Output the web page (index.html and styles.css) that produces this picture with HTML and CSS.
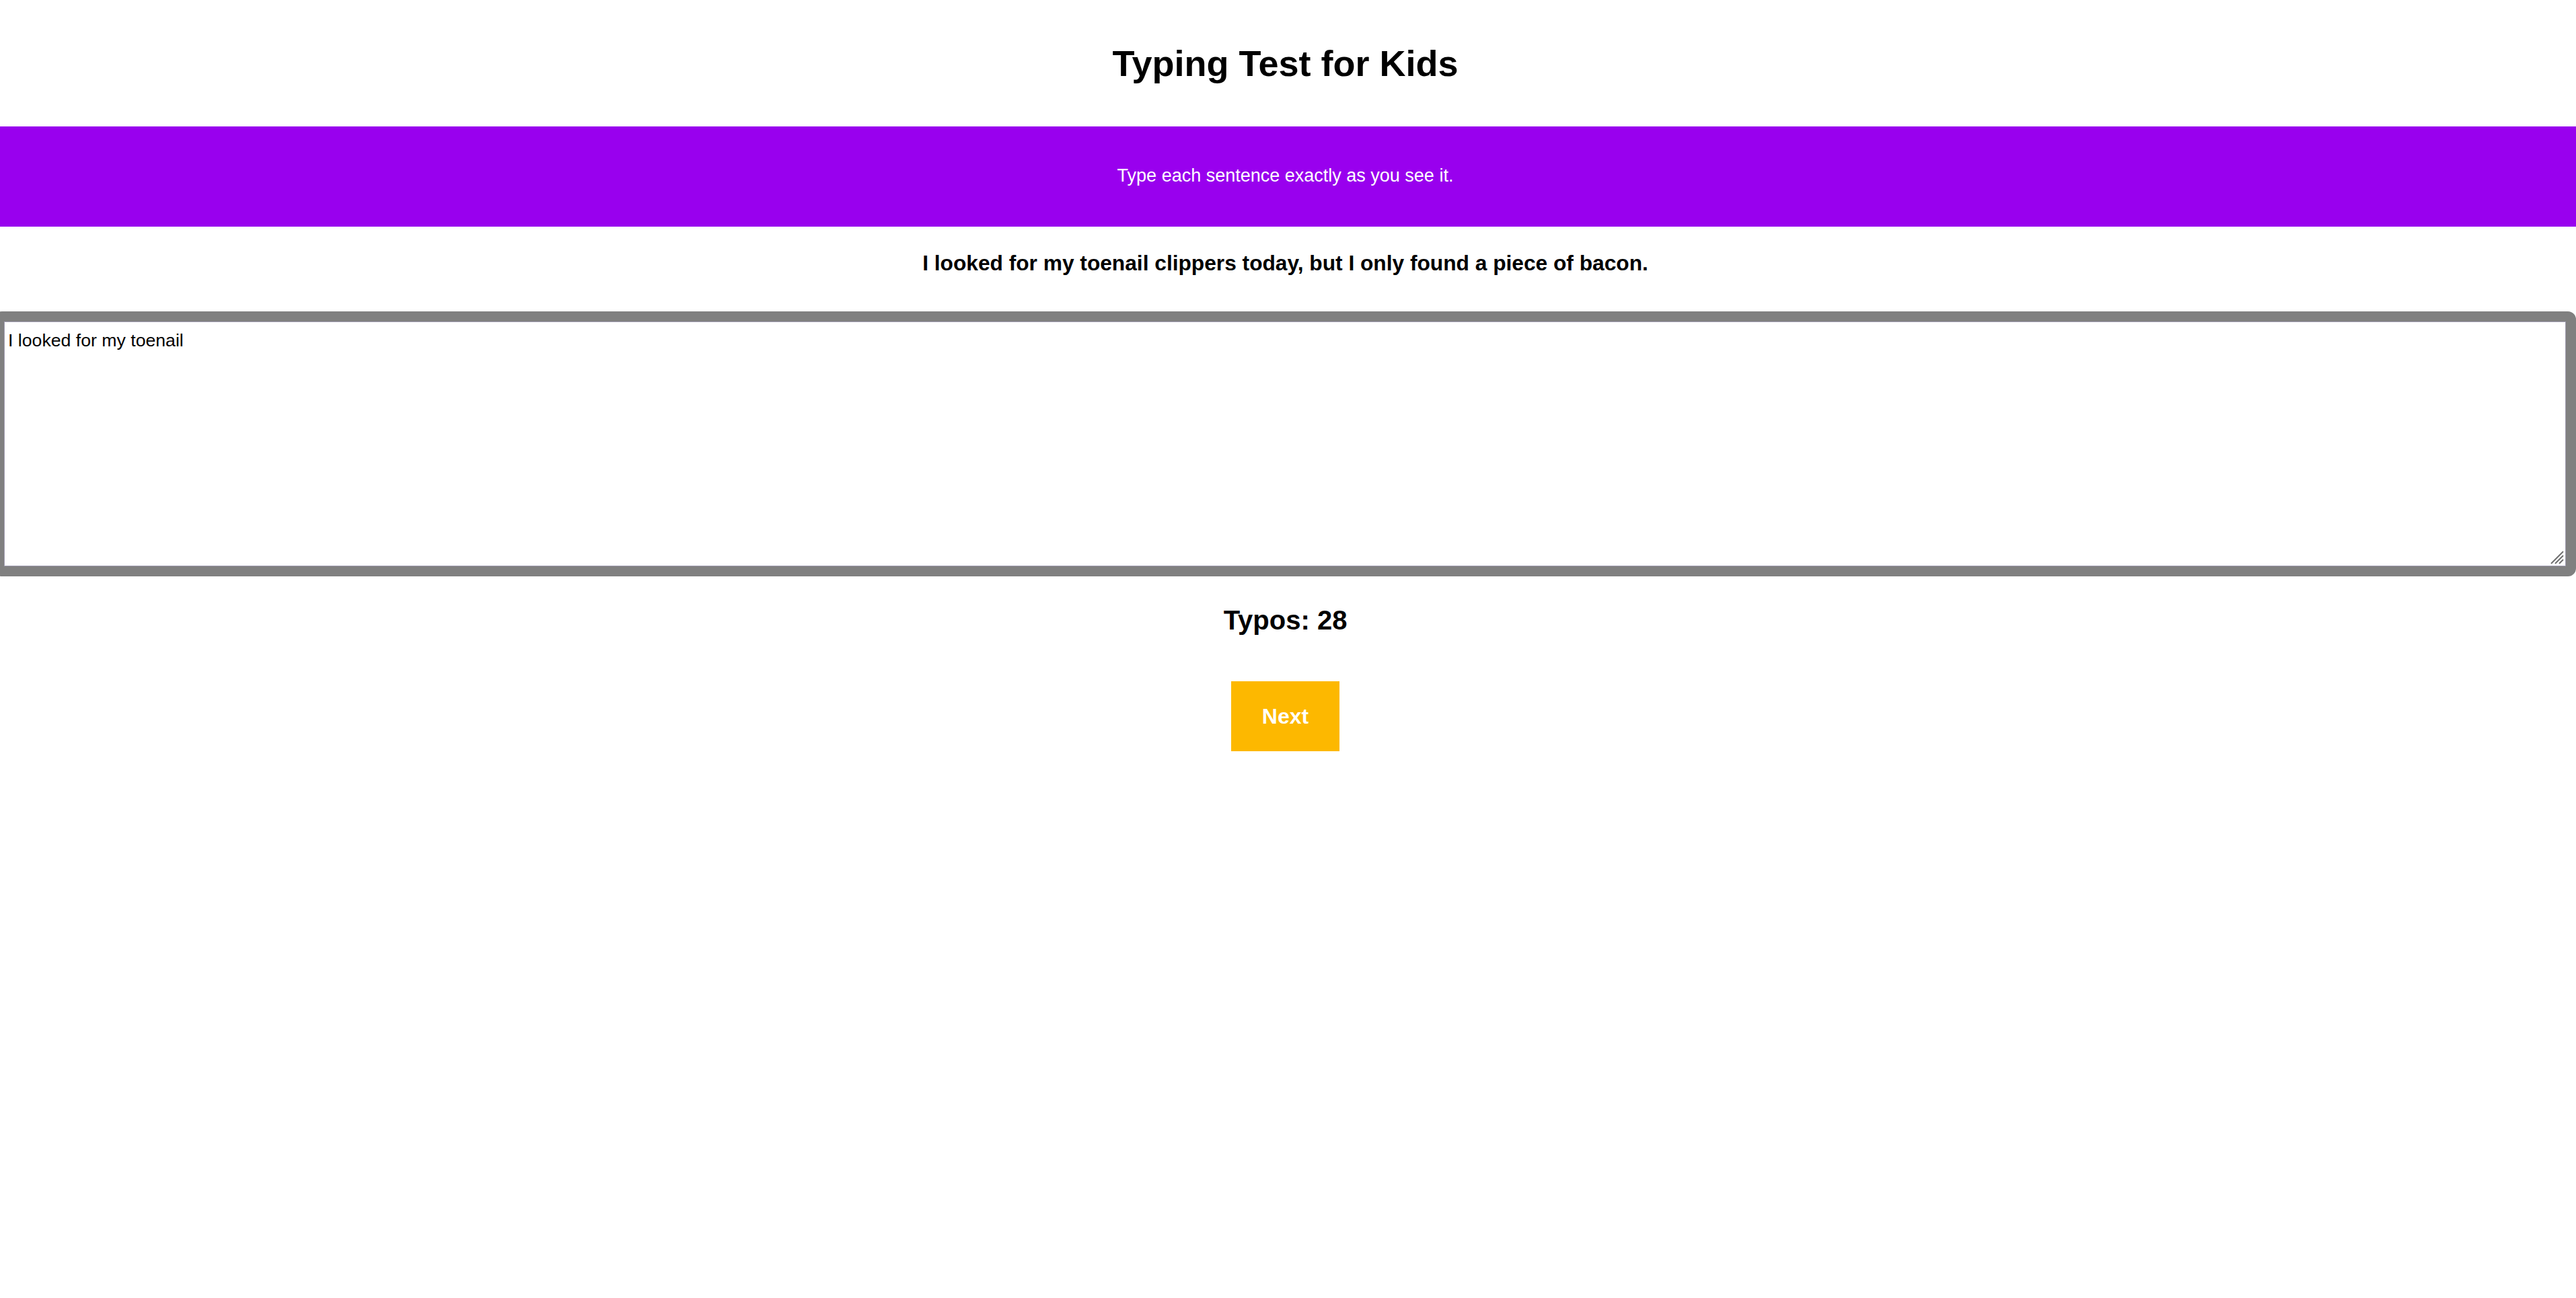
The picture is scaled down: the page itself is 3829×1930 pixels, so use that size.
FILE: index.html
```html
<!DOCTYPE html>
<html lang="en">
<head>
<meta charset="utf-8">
<title>Typing Test for Kids</title>
<link rel="stylesheet" href="styles.css">
</head>
<body>
<div class="page">
  <h1 class="title">Typing Test for Kids</h1>
  <div class="banner">
    <p class="banner-text">Type each sentence exactly as you see it.</p>
  </div>
  <main class="main">
    <p class="sentence">I looked for my toenail clippers today, but I only found a piece of bacon.</p>
    <div class="input-wrap">
      <textarea class="input" spellcheck="false">I looked for my toenail</textarea>
      <svg class="grip" width="22" height="22" viewBox="0 0 22 22" aria-hidden="true">
        <path d="M20 2 L2 20 M20 8 L8 20 M20 14 L14 20" stroke="#6f6f6f" stroke-width="2" fill="none"/>
      </svg>
    </div>
    <h2 class="typos">Typos: 28</h2>
    <button class="next" type="button">Next</button>
  </main>
</div>
</body>
</html>
```

FILE: styles.css
```css
html, body {
  margin: 0;
  padding: 0;
  background: #ffffff;
}

body {
  font-family: "Liberation Sans", Arial, sans-serif;
  color: #000000;
  overflow-x: hidden;
}

.page {
  padding-right: 8px;
}

.title {
  margin: 63px 0 63px;
  font-size: 54px;
  line-height: 1.15;
  font-weight: bold;
  text-align: center;
}

.banner {
  background: #9900ee;
  margin-right: -8px;
  padding: 58px 8px 60px 0;
}

.banner-text {
  margin: 0;
  color: #ffffff;
  font-size: 27px;
  line-height: 1.15;
  text-align: center;
}

.main {
  display: flex;
  flex-direction: column;
  align-items: center;
}

.sentence {
  margin: 36px 0 53px;
  font-size: 31.7px;
  line-height: 1.15;
  font-weight: bold;
  text-align: center;
}

.input-wrap {
  position: relative;
  align-self: stretch;
  margin: 0 -8px 0 -9px;
}

.input {
  display: block;
  box-sizing: border-box;
  width: 100%;
  height: 394px;
  margin: 0;
  border: 15px solid #808080;
  border-radius: 12px;
  box-shadow: inset 0 0 0 1px #a29eb2;
  padding: 13px 6px;
  font-family: "Liberation Sans", Arial, sans-serif;
  font-size: 26.67px;
  line-height: 1.15;
  color: #000000;
  background: #ffffff;
  outline: none;
  resize: none;
}

.grip {
  position: absolute;
  right: 17px;
  bottom: 17px;
}

.typos {
  margin: 42px 0 68px;
  font-size: 40px;
  line-height: 1.15;
  font-weight: bold;
  text-align: center;
}

.next {
  border: none;
  background: #fdb800;
  color: #ffffff;
  font-family: "Liberation Sans", Arial, sans-serif;
  font-size: 32px;
  font-weight: bold;
  line-height: 38px;
  padding: 33px 46px;
  cursor: pointer;
}
```
